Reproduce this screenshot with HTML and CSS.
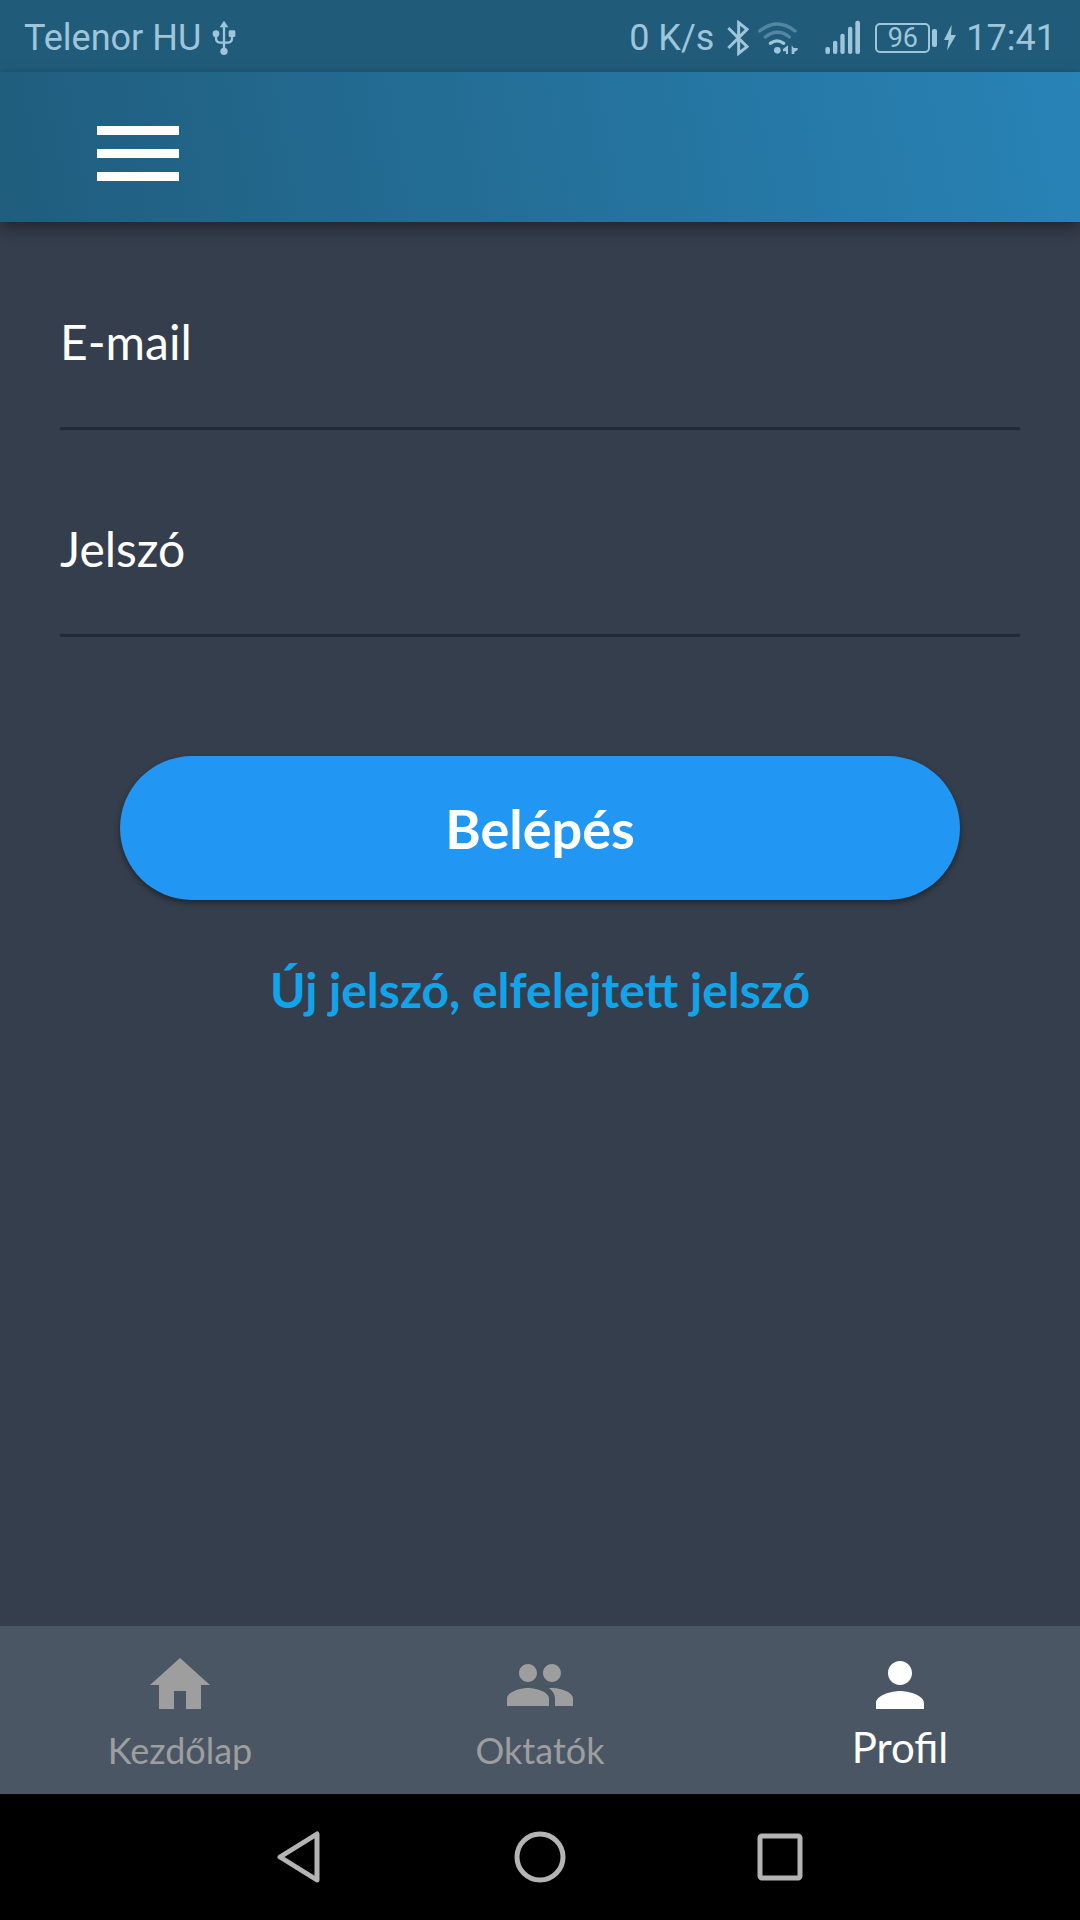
FILE: index.html
```html
<!DOCTYPE html>
<html lang="hu">
  <head>
    <meta charset="UTF-8" />
    <meta name="viewport" content="width=device-width, initial-scale=1.0" />
    <title>Belépés</title>
    <link rel="stylesheet" href="styles.css">
  </head>
  <body>
    <div class="status-bar">
      <span>Telenor HU</span>
      <svg class="usb" width="24" height="36" viewBox="0 0 72 108">
        <path d="M36 14V94M12 42v12q0 14 14 14h20q14 0 14-14V42" fill="none" stroke="currentColor" stroke-width="7" />
        <path d="M36 2l13 20H23z" fill="currentColor" />
        <circle cx="12" cy="41" r="10" fill="currentColor" />
        <rect x="50" y="31" width="20" height="20" rx="4" fill="currentColor" />
        <circle cx="36" cy="94" r="11" fill="currentColor" />
      </svg>

      <div class="status-right">
        <span>0 K/s</span>
        <svg class="bluetooth" width="22" height="36" viewBox="0 0 66 108">
          <path d="M4 24l56 56-25 20V8l25 20L4 84" fill="none" stroke="currentColor" stroke-width="9" />
        </svg>
        <svg class="wifi" width="40" height="36" viewBox="0 0 120 108">
          <g fill="none" stroke="currentColor" stroke-width="10" stroke-linecap="round">
            <path d="M5 33q53-42 106 0M22 51q37-28 72 0" opacity="0.4" />
            <path d="M37 70q20-15 40 0" />
          </g>
          <circle cx="58" cy="91" r="10" fill="currentColor" />
          <path d="M90 76v26h-6v-8h-9v-7zM101 76l6 8h12v6l-10 6v6h-8z" fill="currentColor" />
        </svg>
        <svg class="signal" width="36" height="36" viewBox="0 0 108 108">
          <g fill="currentColor">
            <rect x="1" y="81" width="14" height="21" rx="6" />
            <rect x="24" y="62" width="13" height="40" rx="6" />
            <rect x="46" y="41" width="13" height="61" rx="6" />
            <rect x="69" y="20" width="13" height="82" rx="6" />
            <rect x="91" y="2" width="14" height="100" rx="6" />
          </g>
        </svg>
        <div class="battery">96</div>
        <svg class="bolt" width="12" height="28" viewBox="0 0 36 84">
          <path d="M23 2L0 48h14L9 80l27-47H21z" fill="currentColor" />
        </svg>
        <span>17:41</span>
      </div>
    </div>

    <header class="app-bar">
      <button class="menu-button" type="button" aria-label="Menü">
        <span></span>
        <span></span>
        <span></span>
      </button>
    </header>

    <main>
      <form class="login-form">
        <div class="field">
          <label for="email">E-mail</label>
          <input id="email" type="email" />
        </div>
        <div class="field">
          <label for="password">Jelszó</label>
          <input id="password" type="password" />
        </div>
        <button class="login-button" type="submit">Belépés</button>
        <a class="forgot-link" href="#">Új jelszó, elfelejtett jelszó</a>
      </form>
    </main>

    <nav class="tab-bar">
      <a href="#">
        <svg width="72" height="72" viewBox="0 0 24 24" fill="currentColor">
          <path d="M10 20v-6h4v6h5v-8h3L12 3 2 12h3v8z" />
        </svg>
        <span>Kezdőlap</span>
      </a>
      <a href="#">
        <svg width="72" height="72" viewBox="0 0 24 24" fill="currentColor">
          <path d="M16 11c1.66 0 2.99-1.34 2.99-3S17.66 5 16 5s-3 1.34-3 3 1.34 3 3 3zm-8 0c1.66 0 2.99-1.34 2.99-3S9.66 5 8 5 5 6.34 5 8s1.34 3 3 3zm0 2c-2.33 0-7 1.17-7 3.500V19h14v-2.500c0-2.330-4.670-3.500-7-3.500zm8 0c-.29 0-.62.020-.97.050 1.160.840 1.970 1.970 1.970 3.450V19h6v-2.500c0-2.330-4.670-3.500-7-3.500z" />
        </svg>
        <span>Oktatók</span>
      </a>
      <a class="active" href="#">
        <svg width="72" height="72" viewBox="0 0 24 24" fill="currentColor">
          <path d="M12 12c2.210 0 4-1.790 4-4s-1.790-4-4-4-4 1.790-4 4 1.790 4 4 4zm0 2c-2.670 0-8 1.340-8 4v2h16v-2c0-2.660-5.330-4-8-4z" />
        </svg>
        <span>Profil</span>
      </a>
    </nav>

    <div class="system-nav">
      <button type="button" aria-label="Vissza">
        <svg width="52" height="52" viewBox="0 0 52 52">
          <path d="M43 3v46L6 26z" />
        </svg>
      </button>
      <button type="button" aria-label="Kezdőképernyő">
        <svg width="52" height="52" viewBox="0 0 52 52">
          <circle cx="26" cy="26" r="23" />
        </svg>
      </button>
      <button type="button" aria-label="Legutóbbiak">
        <svg width="52" height="52" viewBox="0 0 52 52">
          <rect x="6" y="5" width="40" height="42" rx="2" />
        </svg>
      </button>
    </div>
  </body>
</html>
```
FILE: styles.css
```css
* {
  box-sizing: border-box;
}
body {
  display: flex;
  flex-direction: column;
  min-height: 100vh;
  margin: 0;
  background-color: #353e4c;
  color: #fff;
  font-family: Lato, sans-serif;
}
button {
  border: 0;
  padding: 0;
  background: none;
  color: inherit;
  font-family: inherit;
}
a {
  text-decoration: none;
}
svg {
  display: block;
}

/* status bar */
.status-bar {
  display: flex;
  align-items: center;
  height: 72px;
  padding: 3px 24px 0;
  background-color: #205c7a;
  color: #9fc5db;
  font-family: Roboto, sans-serif;
  font-size: 36px;
}
.usb {
  margin-left: 11px;
}
.status-right {
  display: flex;
  align-items: center;
  margin-left: auto;
}
.bluetooth {
  margin-left: 13px;
}
.wifi {
  margin-left: 9px;
}
.signal {
  margin-left: 27px;
}
.battery {
  position: relative;
  width: 55px;
  height: 30px;
  margin-left: 14px;
  border: 2px solid;
  border-radius: 5px;
  font-size: 27px;
  line-height: 26px;
  text-align: center;
}
.battery::after {
  content: "";
  position: absolute;
  top: 4px;
  right: -9px;
  width: 5px;
  height: 18px;
  border-radius: 2px;
  background-color: currentColor;
}
.bolt {
  margin: 0 10px 0 14px;
}

/* app bar */
.app-bar {
  display: flex;
  align-items: center;
  height: 150px;
  padding: 12px 97px 0;
  background: linear-gradient(80deg, #205d7d, #2883b6);
  box-shadow: 0 6px 15px rgba(0, 0, 0, 0.4);
}
.menu-button {
  display: flex;
  flex-direction: column;
  gap: 14px;
}
.menu-button span {
  width: 82px;
  height: 9px;
  background-color: #fff;
}

/* login form */
main {
  flex: 1;
  padding: 90px 60px;
}
.login-form {
  display: flex;
  flex-direction: column;
}
.field {
  display: flex;
  flex-direction: column;
  height: 118px;
  margin-bottom: 89px;
  border-bottom: 3px solid #232a36;
}
.field label {
  font-size: 48px;
  line-height: 60px;
}
.field input {
  flex: 1;
  min-height: 0;
  border: 0;
  padding: 0;
  outline: none;
  background: transparent;
  color: #fff;
  font: inherit;
  font-size: 36px;
}
.login-button {
  height: 144px;
  margin: 30px 60px 0;
  border-radius: 72px;
  background-color: #2196f3;
  box-shadow: 0 3px 6px rgba(0, 0, 0, 0.4);
  font-size: 54px;
  font-weight: bold;
}
.forgot-link {
  align-self: center;
  margin-top: 60px;
  color: #12a4ea;
  font-size: 48px;
  font-weight: bold;
  line-height: 60px;
}

/* bottom tabs */
.tab-bar {
  display: grid;
  grid-template-columns: repeat(3, 1fr);
  height: 168px;
  padding-top: 23px;
  background-color: #4a5664;
}
.tab-bar a {
  display: flex;
  flex-direction: column;
  align-items: center;
  color: #9e9e9e;
  font-size: 36px;
  line-height: 58px;
}
.tab-bar .active {
  color: #fff;
  font-size: 42px;
  line-height: 52px;
}

/* android buttons */
.system-nav {
  display: flex;
  justify-content: center;
  align-items: center;
  gap: 188px;
  height: 126px;
  background-color: #000;
}
.system-nav svg {
  fill: none;
  stroke: #b4b4b4;
  stroke-width: 5px;
  stroke-linejoin: round;
}
```
